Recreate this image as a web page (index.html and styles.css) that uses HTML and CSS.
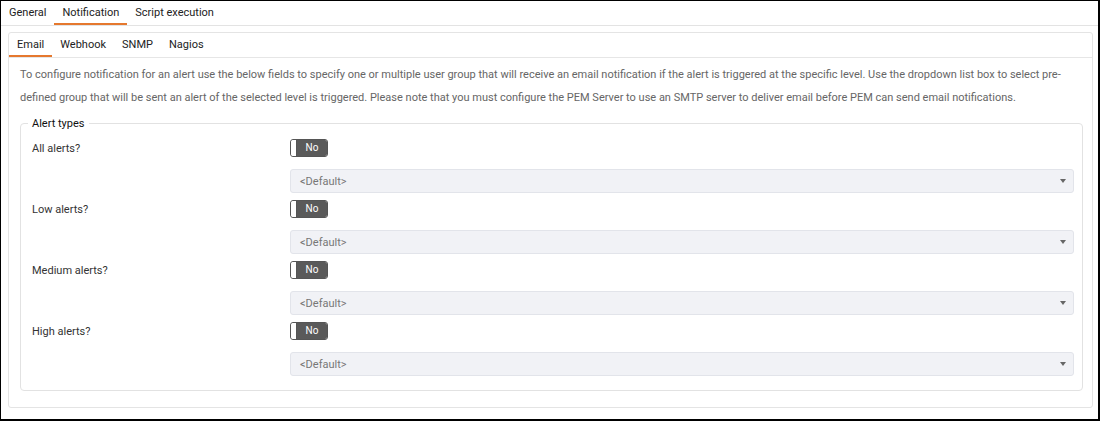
FILE: index.html
```html
<!DOCTYPE html>
<html>
<head>
<meta charset="utf-8">
<link rel="stylesheet" href="styles.css">
</head>
<body>
<div class="frame">
  <div class="tabs">
    <div class="tab">General</div>
    <div class="tab active">Notification</div>
    <div class="tab">Script execution</div>
  </div>
  <div class="panel">
    <div class="subtabs">
      <div class="subtab active">Email</div>
      <div class="subtab">Webhook</div>
      <div class="subtab">SNMP</div>
      <div class="subtab">Nagios</div>
    </div>
    <p class="desc">To configure notification for an alert use the below fields to specify one or multiple user group that will receive an email notification if the alert is triggered at the specific level. Use the dropdown list box to select pre-defined group that will be sent an alert of the selected level is triggered. Please note that you must configure the PEM Server to use an SMTP server to deliver email before PEM can send email notifications.</p>
    <fieldset class="types">
      <legend>Alert types</legend>
      <div class="row">
        <div class="label">All alerts?</div>
        <div class="toggle"><span class="handle"></span><span class="off">No</span></div>
      </div>
      <div class="selrow"><div class="select"><span>&lt;Default&gt;</span><span class="caret"></span></div></div>
      <div class="row">
        <div class="label">Low alerts?</div>
        <div class="toggle"><span class="handle"></span><span class="off">No</span></div>
      </div>
      <div class="selrow"><div class="select"><span>&lt;Default&gt;</span><span class="caret"></span></div></div>
      <div class="row">
        <div class="label">Medium alerts?</div>
        <div class="toggle"><span class="handle"></span><span class="off">No</span></div>
      </div>
      <div class="selrow"><div class="select"><span>&lt;Default&gt;</span><span class="caret"></span></div></div>
      <div class="row">
        <div class="label">High alerts?</div>
        <div class="toggle"><span class="handle"></span><span class="off">No</span></div>
      </div>
      <div class="selrow"><div class="select"><span>&lt;Default&gt;</span><span class="caret"></span></div></div>
    </fieldset>
  </div>
</div>
</body>
</html>
```

FILE: styles.css
```css
* { box-sizing: border-box; }
html, body { margin: 0; padding: 0; background: #fff; }
body { font-family: Roboto, "Liberation Sans", sans-serif; color: #222; }
.frame {
  width: 1100px;
  height: 421px;
  border: 1px solid #000;
  border-width: 1px 2px 2px 1px;
  overflow: hidden;
}
.tabs {
  display: flex;
  height: 25px;
  border-bottom: 1px solid #e3e3e3;
}
.tab {
  padding: 0 8px;
  font-size: 11px;
  line-height: 23px;
  height: 24px;
  color: #222;
}
.tab.active { border-bottom: 2px solid #e5782e; }
.panel {
  margin: 6px 5px 0 7px;
  height: 376px;
  border: 1px solid #e4e4e4;
  border-radius: 3px;
}
.subtabs {
  display: flex;
  height: 25px;
  border-bottom: 1px solid #e6e6e6;
}
.subtab {
  padding: 0 8px;
  font-size: 11px;
  line-height: 23px;
  height: 24px;
  color: #222;
}
.subtab.active { border-bottom: 2px solid #e5782e; }
.desc {
  margin: 5px 0 0 0;
  padding: 0 11px;
  font-size: 11px;
  line-height: 23px;
  color: #666;
}
.types {
  margin: 8px 9px 0 11px;
  padding: 0 8px 14px 11px;
  border: 1px solid #e2e2e2;
  border-radius: 4px;
  min-width: 0;
}
.types legend {
  padding: 0 4px;
  margin-left: -4px;
  font-size: 11px;
  color: #111;
}
.row {
  display: flex;
  align-items: center;
  height: 18px;
  margin-top: 7px;
}
.types legend + .row { margin-top: 9px; }
.label {
  width: 258px;
  font-size: 11px;
  color: #333;
}
.toggle {
  display: flex;
  width: 38px;
  height: 18px;
  border: 1px solid #555;
  border-radius: 3px;
  overflow: hidden;
}
.handle {
  width: 6px;
  background: #fff;
  border-right: 1px solid #555;
  border-radius: 2px 0 0 2px;
}
.off {
  flex: 1;
  background: #5a5a5a;
  color: #fff;
  font-size: 10px;
  line-height: 16px;
  text-align: center;
}
.selrow {
  margin-top: 12px;
  padding-left: 258px;
}
.select {
  display: flex;
  align-items: center;
  justify-content: space-between;
  height: 24px;
  padding: 0 6px 0 9px;
  background: #f1f2f6;
  border: 1px solid #e2e4ea;
  border-radius: 3px;
  font-size: 11px;
  color: #777;
}
.caret {
  width: 0;
  height: 0;
  margin-right: 1px;
  border-left: 3.5px solid transparent;
  border-right: 3.5px solid transparent;
  border-top: 4px solid #666;
}
```
